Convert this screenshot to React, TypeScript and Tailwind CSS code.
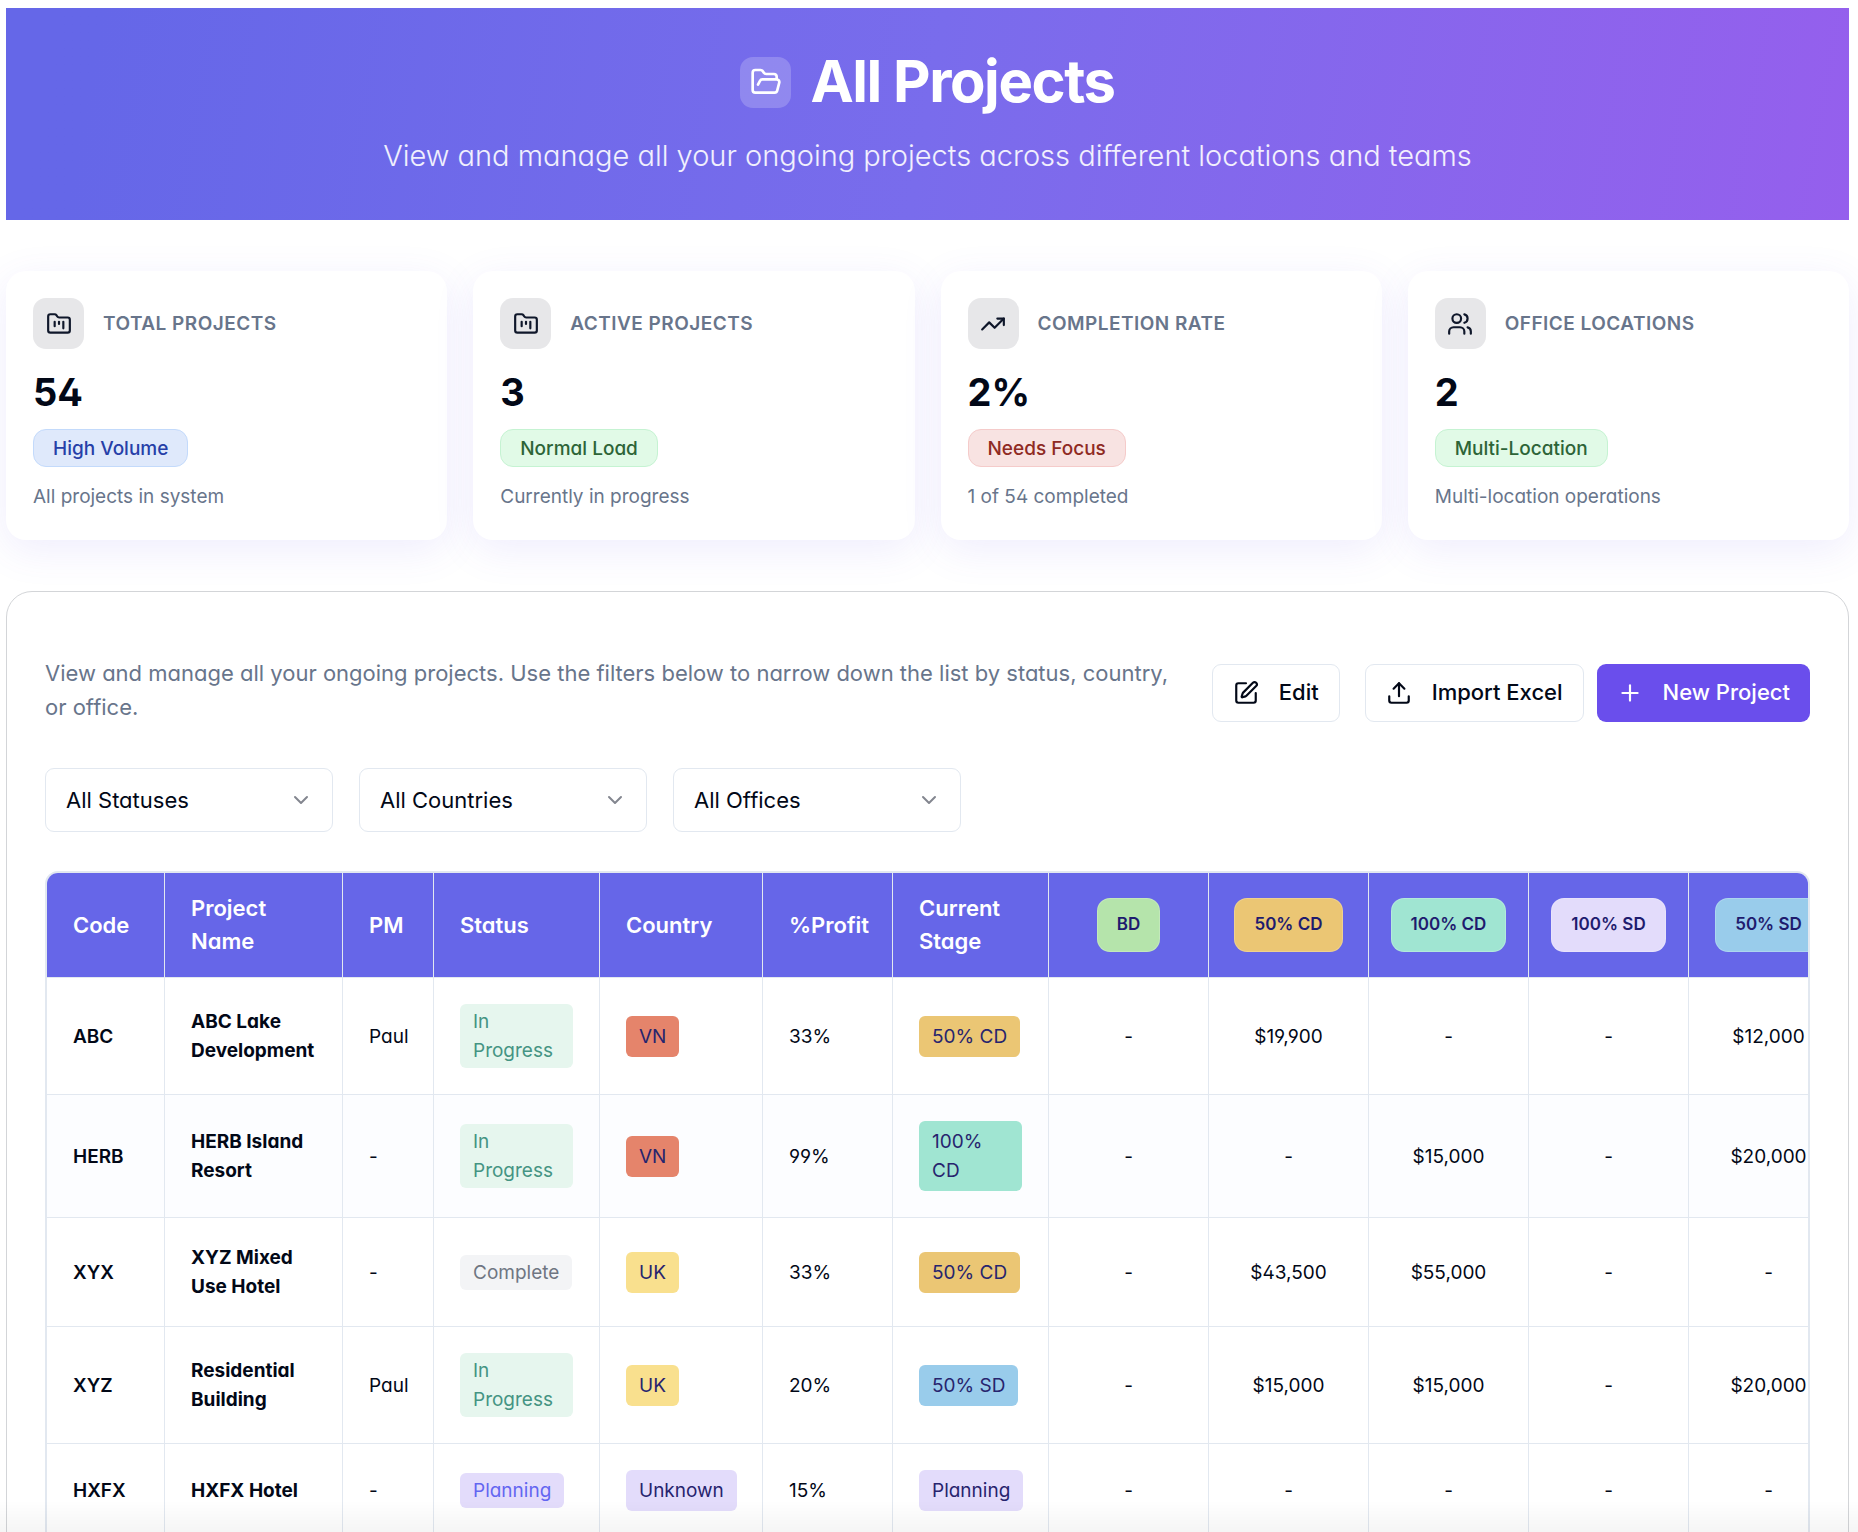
import React from "react";
import {
  ChevronDown,
  FolderKanban,
  FolderOpen,
  Plus,
  SquarePen,
  TrendingUp,
  Upload,
  Users,
  type LucideIcon,
} from "lucide-react";

const BLUE = "border-[#c3dafb] bg-[#dfe9fb] text-[#263fa8]";
const GREEN = "border-[#c5f3d2] bg-[#e1fae7] text-[#2d6437]";
const RED = "border-[#f5cbca] bg-[#f8e3e2] text-[#8f2a23]";

type Stat = { icon: LucideIcon; label: string; value: string; tag: string; tone: string; note: string };

const stats: Stat[] = [
  { icon: FolderKanban, label: "TOTAL PROJECTS", value: "54", tag: "High Volume", tone: BLUE, note: "All projects in system" },
  { icon: FolderKanban, label: "ACTIVE PROJECTS", value: "3", tag: "Normal Load", tone: GREEN, note: "Currently in progress" },
  { icon: TrendingUp, label: "COMPLETION RATE", value: "2%", tag: "Needs Focus", tone: RED, note: "1 of 54 completed" },
  { icon: Users, label: "OFFICE LOCATIONS", value: "2", tag: "Multi-Location", tone: GREEN, note: "Multi-location operations" },
];

const statusTone: Record<string, string> = {
  "In Progress": "bg-[#e6f6ee] text-[#459483]",
  Complete: "bg-[#f3f4f6] text-[#6f7682]",
  Planning: "bg-[#e3dcfb] text-[#6366f1]",
};

const countryTone: Record<string, string> = {
  VN: "bg-[#e5846b]",
  UK: "bg-[#f9e08e]",
  Unknown: "bg-[#e3dcfb]",
};

const stageTone: Record<string, string> = {
  BD: "bg-[#b5e4ab]",
  "50% CD": "bg-[#ebc674]",
  "100% CD": "bg-[#a0e5d2]",
  "100% SD": "bg-[#e3dcfb]",
  "50% SD": "bg-[#99cceb]",
  Planning: "bg-[#e3dcfb]",
};

const stages = ["BD", "50% CD", "100% CD", "100% SD", "50% SD"];

type Project = {
  code: string;
  name: string;
  pm: string;
  status: string;
  country: string;
  profit: string;
  stage: string;
  fees: string[];
};

const projects: Project[] = [
  { code: "ABC", name: "ABC Lake Development", pm: "Paul", status: "In Progress", country: "VN", profit: "33%", stage: "50% CD", fees: ["-", "$19,900", "-", "-", "$12,000"] },
  { code: "HERB", name: "HERB Island Resort", pm: "-", status: "In Progress", country: "VN", profit: "99%", stage: "100% CD", fees: ["-", "-", "$15,000", "-", "$20,000"] },
  { code: "XYX", name: "XYZ Mixed Use Hotel", pm: "-", status: "Complete", country: "UK", profit: "33%", stage: "50% CD", fees: ["-", "$43,500", "$55,000", "-", "-"] },
  { code: "XYZ", name: "Residential Building", pm: "Paul", status: "In Progress", country: "UK", profit: "20%", stage: "50% SD", fees: ["-", "$15,000", "$15,000", "-", "$20,000"] },
  { code: "HXFX", name: "HXFX Hotel", pm: "-", status: "Planning", country: "Unknown", profit: "15%", stage: "Planning", fees: ["-", "-", "-", "-", "-"] },
];

const headings = ["Code", "Project Name", "PM", "Status", "Country", "%Profit", "Current Stage"];

function StatCard({ icon: Icon, label, value, tag, tone, note }: Stat) {
  return (
    <article className="rounded-[20px] bg-white px-[27px] pt-[27px] pb-[29px] shadow-[0_10px_40px_rgba(100,80,240,0.1)]">
      <div className="flex items-center gap-[19px]">
        <span className="flex size-[51px] items-center justify-center rounded-[13px] bg-[#e7e7e9]">
          <Icon className="size-[26px] text-[#0f172a]" strokeWidth={2} />
        </span>
        <h2 className="pt-0.5 text-[19px] font-semibold tracking-wide text-[#68758b]">{label}</h2>
      </div>
      <p className="mt-[18px] text-[38px] leading-[50px] font-bold">{value}</p>
      <span className={`mt-3 inline-flex h-[38px] items-center rounded-[13px] border px-[19px] pt-0.5 text-[19px] font-medium ${tone}`}>
        {tag}
      </span>
      <p className="mt-4 text-[19px] leading-[28px] text-[#68758b]">{note}</p>
    </article>
  );
}

function FilterSelect({ label, name }: { label: string; name: string }) {
  return (
    <div className="relative w-[288px]">
      <select
        aria-label={name}
        className="h-16 w-full appearance-none rounded-[9px] border border-[#e2e8f0] bg-white px-5 text-[22px] outline-none"
      >
        <option>{label}</option>
      </select>
      <ChevronDown className="pointer-events-none absolute top-5 right-5 size-6 text-[#83868f]" strokeWidth={2} />
    </div>
  );
}

export default function App() {
  return (
    <div className="h-screen overflow-hidden bg-white pt-2 pr-[9px] pl-[6px] font-['Inter',sans-serif] text-[#020817] [font-feature-settings:'cv02','cv03','cv04','cv11']">
      <header className="flex h-[212px] flex-col items-center bg-linear-100 from-[#6567e8] from-5% via-[#796cec] to-[#955fed] pt-10 text-white">
        <div className="flex items-center gap-[19px]">
          <span className="flex size-[51px] items-center justify-center rounded-[13px] bg-white/20">
            <FolderOpen className="size-[32px]" strokeWidth={2} />
          </span>
          <h1 className="pb-0.5 text-[58px] leading-[66px] font-bold tracking-tight">All Projects</h1>
        </div>
        <p className="mt-[18px] text-[29px] leading-[44px] font-light text-white/90">
          View and manage all your ongoing projects across different locations and teams
        </p>
      </header>

      <section className="mt-[51px] grid grid-cols-4 gap-[26px]">
        {stats.map((s) => (
          <StatCard key={s.label} {...s} />
        ))}
      </section>

      <main className="mt-[51px] rounded-t-[26px] border border-[#d3d5d8] bg-white px-[38px] pt-16">
        <div className="flex items-center gap-5">
          <p className="flex-1 pb-[5px] text-[22px] leading-[34px] text-[#68758b]">
            View and manage all your ongoing projects. Use the filters below to narrow down the list by status, country, or
            office.
          </p>
          <div className="flex shrink-0">
            <button className="flex h-[58px] items-center gap-5 rounded-[9px] border border-[#e2e8f0] px-5 text-[22px] font-medium">
              <SquarePen className="size-[26px]" strokeWidth={2} />
              Edit
            </button>
            <button className="ml-[25px] flex h-[58px] items-center gap-5 rounded-[9px] border border-[#e2e8f0] px-5 text-[22px] font-medium">
              <Upload className="size-[26px]" strokeWidth={2} />
              Import Excel
            </button>
            <button className="ml-[13px] flex h-[58px] items-center gap-5 rounded-[9px] bg-[#6a4eec] px-5 text-[22px] font-medium text-white">
              <Plus className="size-[26px]" strokeWidth={2} />
              New Project
            </button>
          </div>
        </div>

        <div className="mt-[39px] flex gap-[26px]">
          <FilterSelect name="Status" label="All Statuses" />
          <FilterSelect name="Country" label="All Countries" />
          <FilterSelect name="Office" label="All Offices" />
        </div>

        <div className="mt-[39px] overflow-hidden rounded-t-[13px] border-2 border-[#e2e8f0]">
          <table className="w-[1802px] table-fixed border-separate border-spacing-0 text-left">
            <colgroup>
              <col className="w-[118px]" />
              <col className="w-[178px]" />
              <col className="w-[91px]" />
              <col className="w-[166px]" />
              <col className="w-[163px]" />
              <col className="w-[130px]" />
              <col className="w-[156px]" />
              {stages.map((s) => (
                <col key={s} className="w-[160px]" />
              ))}
            </colgroup>
            <thead>
              <tr className="h-[105px] bg-[#6666e8] text-white">
                {headings.map((h) => (
                  <th
                    key={h}
                    scope="col"
                    className="border-r border-b border-[#e2e8f0] pr-5 pl-[26px] text-[22px] leading-[33px] font-semibold"
                  >
                    {h}
                  </th>
                ))}
                {stages.map((s) => (
                  <th key={s} scope="col" className="border-r border-b border-[#e2e8f0] text-center">
                    <span
                      className={`inline-flex h-[54px] items-center rounded-[13px] border border-white/20 px-[19px] text-[17px] font-semibold text-[#1e1b6e] ${stageTone[s]}`}
                    >
                      {s}
                    </span>
                  </th>
                ))}
              </tr>
            </thead>
            <tbody className="text-[19px] leading-[29px]">
              {projects.map((p, i) => (
                <tr
                  key={p.code}
                  className={`*:border-r *:border-b *:border-[#e2e8f0] *:py-[25px] ${i === 1 ? "bg-[#fcfdff]" : "bg-white"}`}
                >
                  <td className="pl-[26px] font-semibold">{p.code}</td>
                  <td className="pr-5 pl-[26px] font-bold">{p.name}</td>
                  <td className="pl-[26px]">{p.pm}</td>
                  <td className="px-[26px]">
                    <span className={`my-px inline-block rounded-[6px] px-[13px] py-[3px] align-middle ${statusTone[p.status]}`}>
                      {p.status}
                    </span>
                  </td>
                  <td className="pr-5 pl-[26px]">
                    <span className={`my-px inline-block rounded-[6px] px-[13px] py-[6px] align-middle text-[#27246e] ${countryTone[p.country]}`}>
                      {p.country}
                    </span>
                  </td>
                  <td className="pl-[26px]">{p.profit}</td>
                  <td className="px-[26px]">
                    <span className={`my-px inline-block rounded-[6px] px-[13px] py-[6px] align-middle text-[#27246e] ${stageTone[p.stage]}`}>
                      {p.stage}
                    </span>
                  </td>
                  {p.fees.map((fee, j) => (
                    <td key={j} className="text-center">
                      {fee}
                    </td>
                  ))}
                </tr>
              ))}
            </tbody>
          </table>
        </div>
      </main>
      <div className="pointer-events-none fixed inset-x-0 bottom-0 h-8 bg-linear-to-t from-black/4 to-transparent" />
    </div>
  );
}
